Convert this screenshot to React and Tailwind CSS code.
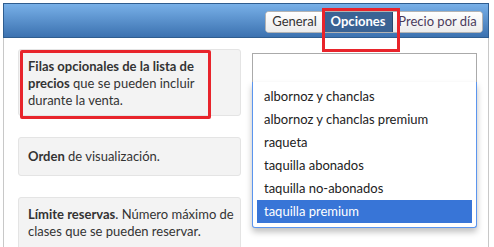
import React from 'react';

const options = [
    'albornoz y chanclas',
    'albornoz y chanclas premium',
    'raqueta',
    'taquilla abonados',
    'taquilla no-abonados',
    'taquilla premium',
];

const App = () => {
    return (
        <div
            className="relative w-[494px] h-[247px] overflow-hidden bg-white text-[13px] text-[#333]"
            style={{ fontFamily: 'Lato, "Open Sans", sans-serif' }}
        >
            <div className="ml-[3px] mt-[3px] w-[486px] h-[260px] border-x border-[#c8c8c8]">
                {/* header */}
                <div className="h-[35px] -mx-px border border-[#2f5d8f] bg-gradient-to-b from-[#78b0e8] to-[#3c72b0] flex justify-end items-start pt-[7px] pr-[5px]">
                    <div className="flex h-[22px] rounded-[4px] border border-[#b3b3b3] bg-white overflow-hidden">
                        <div className="w-[57px] flex items-center justify-center bg-gradient-to-b from-white to-[#ececec] text-[#333]">
                            General
                        </div>
                        <div className="w-[70px] flex items-center justify-center bg-[#3a6394] border-x border-[#27476e] text-white font-bold">
                            Opciones
                        </div>
                        <div className="w-[89px] flex items-center justify-center bg-gradient-to-b from-white to-[#ececec] text-[#4a3b5c]">
                            Precio por día
                        </div>
                    </div>
                </div>

                {/* body */}
                <div className="flex pl-[14px] pt-[11px]">
                    <div className="w-[223px] flex flex-col gap-[21px]">
                        <div className="h-[67px] rounded-[3px] border border-[#e4e4e4] bg-[#f3f3f3] pl-[9px] pr-[4px] pt-[8px] leading-[17px]">
                            <b>Filas opcionales de la lista de precios</b> que se pueden incluir durante la venta.
                        </div>
                        <div className="h-[39px] rounded-[3px] border border-[#e4e4e4] bg-[#f3f3f3] pl-[9px] pr-[4px] pt-[10px] leading-[17px]">
                            <b>Orden</b> de visualización.
                        </div>
                        <div className="h-[60px] rounded-[3px] border border-[#e4e4e4] bg-[#f3f3f3] pl-[9px] pr-[2px] pt-[8px] leading-[17px]">
                            <b>Límite reservas</b>. Número máximo de clases que se pueden reservar.
                        </div>
                    </div>
                    <div className="ml-[11px] w-[225px] flex flex-col">
                        <div className="mt-[4px] h-[30px] border border-[#b0b0b0] bg-white" />
                        <div className="mt-[60px] h-[20px] rounded-[3px] border border-[#cfcfcf] bg-white" />
                        <div className="mt-[40px] h-[20px] rounded-[3px] border border-[#cfcfcf] bg-white" />
                    </div>
                </div>
            </div>

            {/* open dropdown list */}
            <div className="absolute left-[252px] top-[53px] w-[225px]">
                <div className="h-[29px] border-x border-t border-[#aaaaaa] bg-white" />
                <div className="border-x border-b border-[#5b95ee] rounded-b-[3px] bg-white px-[4px] pt-[3px] pb-[4px] shadow-[0_4px_6px_rgba(0,0,0,0.25)]">
                    {options.map((opt, i) => (
                        <div
                            key={opt}
                            className={
                                i === options.length - 1
                                    ? 'h-[23px] flex items-center pl-[7px] bg-[#3875d7] text-white'
                                    : 'h-[23px] flex items-center pl-[7px] text-[#222]'
                            }
                        >
                            {opt}
                        </div>
                    ))}
                </div>
            </div>

            {/* red annotation boxes */}
            <div className="absolute left-[20px] top-[50px] w-[191px] h-[69px] border-[3px] border-[#e8242b] rounded-[2px]" />
            <div className="absolute left-[322px] top-[8px] w-[78px] h-[44px] border-[3px] border-[#e8242b]" />
        </div>
    );
};

export default App;
